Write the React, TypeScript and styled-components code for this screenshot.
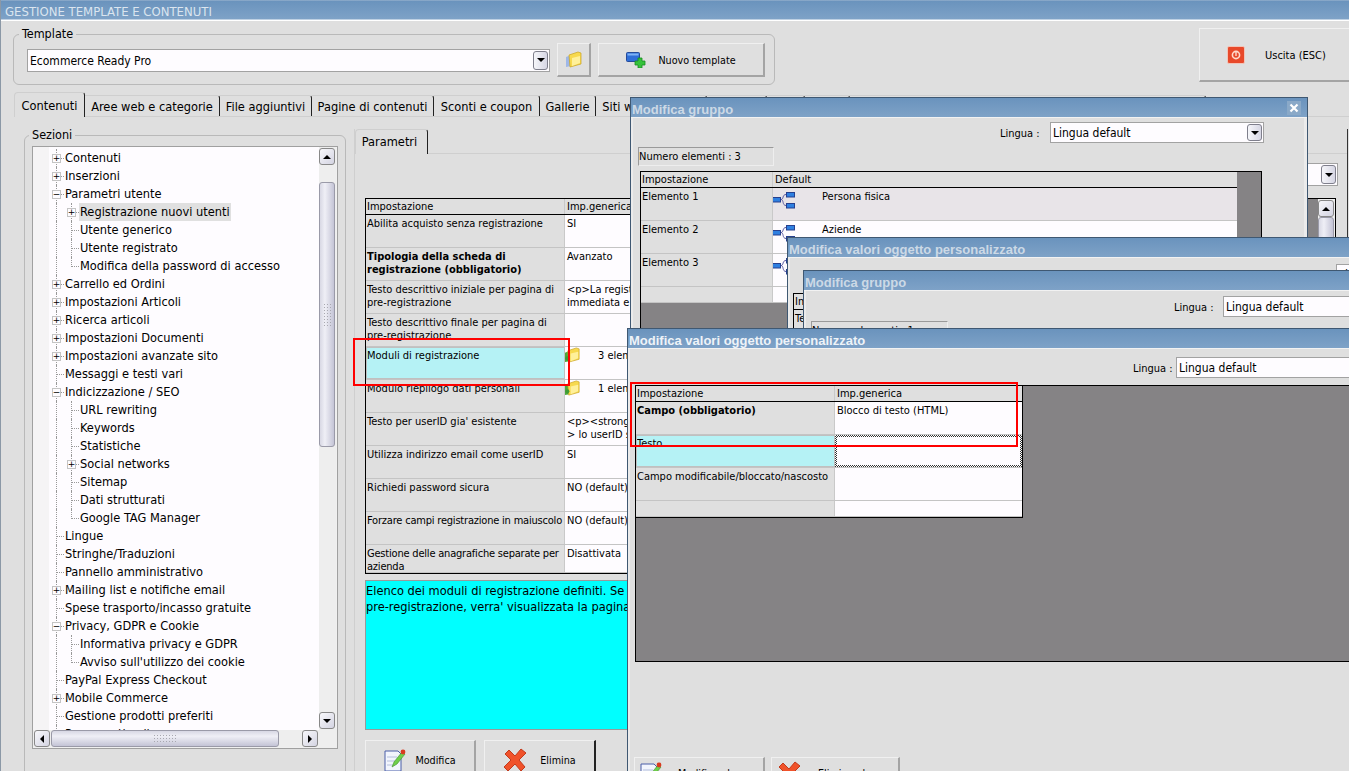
import React from 'react';
import styled, { createGlobalStyle } from 'styled-components';

const Global = createGlobalStyle`
  html, body { margin: 0; padding: 0; background: #dfdfdf; overflow: hidden; }
  * { box-sizing: border-box; }
  body { font-family: "DejaVu Sans Condensed", "DejaVu Sans", sans-serif; font-stretch: condensed; font-size: 11px; color: #000; }
`;

const Page = styled.div`
  position: relative; width: 1349px; height: 771px; overflow: hidden; background: #dfdfdf;
  border-left: 1px solid #8b98a6; display: flex; flex-direction: column;
`;
const AppTitle = styled.div`
  height: 21px; flex: none; padding: 3px 0 0 4px; line-height: 17px; font-size: 13px; color: #dbe5ef;
  background: linear-gradient(#a4bad2 0, #6a93bd 1px, #7ea2c7 19px, #fff 20px);
`;
const TopRow = styled.div`display: flex; height: 71px; flex: none;`;
const Group = styled.fieldset<{ $w: number; $h: number }>`
  width: ${p => p.$w}px; height: ${p => p.$h}px; margin: 0; padding: 0; min-width: 0;
  border: 1px solid #b9b9b9; border-radius: 6px;
`;
const TemplateGroup = styled(Group)`margin: 6px 0 0 12px;`;
const SectionGroup = styled(Group)`margin: 11px 0 0 0; flex: none;`;
const Legend = styled.legend`
  margin-left: 5px; padding: 0 3px; font-size: 12.5px; line-height: 14px; height: 14px;
`;
const SectionLegend = styled(Legend)`margin-left: 4px;`;
const TemplateRow = styled.div`display: flex; align-items: center; gap: 7px; padding: 2px 0 0 13px;`;

const SelectBox = styled.div<{ $w: number; $h?: number }>`
  width: ${p => p.$w}px; height: ${p => p.$h ?? 21}px; flex: none; background: #fefcff;
  border: 1px solid #a2a2a2; display: flex; align-items: center; justify-content: space-between;
  padding: 0 1px 0 2px; font-size: 12px;
  & > span:first-child { padding-top: 1px; }
`;
const ArrowBtn = styled.span`
  width: 15px; height: calc(100% - 2px); flex: none; border: 1px solid #7f7f8c; border-radius: 3px;
  background: linear-gradient(90deg, #f6f6fa, #d6d6e4); display: flex; align-items: center; justify-content: center;
`;
const Tri = styled.span<{ $d: 'u' | 'd' | 'l' | 'r' }>`
  width: 0; height: 0; border: 4px solid transparent;
  ${p => p.$d === 'd' && 'border-top-color:#000;border-bottom-width:0;'}
  ${p => p.$d === 'u' && 'border-bottom-color:#000;border-top-width:0;'}
  ${p => p.$d === 'l' && 'border-right-color:#000;border-left-width:0;'}
  ${p => p.$d === 'r' && 'border-left-color:#000;border-right-width:0;'}
`;
const Select = ({ w, h, text }: { w: number; h?: number; text: string }) => (
  <SelectBox $w={w} $h={h}><span>{text}</span><ArrowBtn><Tri $d="d" /></ArrowBtn></SelectBox>
);

const Button = styled.div<{ $w: number; $h: number; $gap?: number; $focus?: boolean; $start?: boolean }>`
  width: ${p => p.$w}px; height: ${p => p.$h}px; flex: none; background: #dfdfdf; font-size: 10.7px;
  border-top: 1px solid #f0f0f0; border-left: 1px solid #f0f0f0;
  border-right: 2px solid ${p => (p.$focus ? '#222' : '#a4a4a4')}; border-bottom: 2px solid #a4a4a4;
  display: flex; align-items: center; justify-content: ${p => (p.$start ? 'flex-start' : 'center')};
  padding-left: ${p => (p.$start ? 5 : 0)}px; gap: ${p => p.$gap ?? 10}px;
  & > span { padding-top: 1px; }
`;
const ExitButton = styled(Button)`margin: 7px 0 0 auto; border-right: 0; font-size: 11px; padding-left: 27px; justify-content: flex-start;`;

const TabBar = styled.div`
  display: flex; height: 25px; flex: none; margin-left: 13px; border-bottom: 1px solid #cfcfcf; font-size: 12.7px;
`;
const Tab = styled.div<{ $w: number; $active?: boolean }>`
  width: ${p => p.$w}px; flex: none; display: flex; align-items: center; justify-content: center;
  white-space: nowrap; overflow: hidden; border-right: 1px solid #222; border-top-right-radius: 3px;
  margin-top: ${p => (p.$active ? 0 : 3)}px;
  border-top: 1px solid #cfcfcf; border-left: ${p => (p.$active ? '1px solid #cfcfcf' : '0')};
  ${p => p.$active && 'border-top-left-radius: 4px; margin-bottom: -1px; background: #dfdfdf;'}
`;
const SubTab = styled(Tab)`padding: 0 4px 2px 0;`;
const Main = styled.div`display: flex; flex: 1; min-height: 0; padding-left: 23px; border-left: 0;`;

const TreeBox = styled.div`
  margin: 4px 0 0 7px; width: 306px; height: 603px; border: 1px solid #a0a0a0; background: #f0f0f0;
  display: grid; grid-template-columns: 1fr 18px; grid-template-rows: 1fr 18px;
`;
const TreeView = styled.div`
  overflow: hidden; padding-top: 2px; background: linear-gradient(90deg, #f5f4f5 16px, #fefcff 16px);
`;
const TreeRowBox = styled.div`display: flex; height: 18px; align-items: stretch; padding-left: 16px; white-space: nowrap; font-size: 12.7px;`;
const Guide = styled.span<{ $line: boolean; $hook: boolean; $end?: boolean }>`
  position: relative; width: 15px; flex: none;
  &::before { content: ''; position: absolute; left: 7px; top: 0; bottom: ${p => (p.$end ? '8px' : '0')}; border-left: 1px dotted ${p => (p.$line ? '#999' : 'transparent')}; }
  &::after { content: ''; position: absolute; left: 8px; right: 0; top: 9px; border-top: 1px dotted ${p => (p.$hook ? '#999' : 'transparent')}; }
`;
const Expander = styled.span`
  position: absolute; left: 3px; top: 5px; width: 9px; height: 9px; z-index: 1; background: #fefcff;
  border: 1px solid #c4c4c4; display: flex; align-items: center; justify-content: center;
  font: 9px/7px "DejaVu Sans", sans-serif;
`;
const TreeLabel = styled.span<{ $sel?: boolean }>`
  line-height: 18px; padding: 0 1px; align-self: stretch; ${p => p.$sel && 'background: #e0e0e0;'}
`;

const VBar = styled.div`display: flex; flex-direction: column; width: 17px; flex: none; background: #eeeeee; padding: 1px 0;`;
const HBar = styled.div`display: flex; height: 17px; background: #eeeeee; padding: 0 1px; grid-column: 1;`;
const ScrollBtn = styled.span`
  width: 16px; height: 17px; flex: none; border: 1px solid #888; border-radius: 3px;
  background: linear-gradient(135deg, #f8f8fb, #d4d4e2); display: flex; align-items: center; justify-content: center;
`;
const VThumb = styled.div<{ $top: number; $h: number }>`
  width: 16px; height: ${p => p.$h}px; margin-top: ${p => p.$top}px; flex: none; border: 1px solid #9a9aa8; border-radius: 3px;
  background: linear-gradient(90deg, #d8d8e4, #efeff6 35%, #c4c4d6); display: flex; align-items: center; justify-content: center;
`;
const HThumb = styled.div<{ $w: number }>`
  width: ${p => p.$w}px; margin-left: 1px; flex: none; border: 1px solid #9a9aa8; border-radius: 3px;
  background: linear-gradient(#d8d8e4, #efeff6 35%, #c4c4d6); display: flex; align-items: center; justify-content: center;
`;
const Grip = styled.span<{ $w: number; $h: number }>`
  width: ${p => p.$w}px; height: ${p => p.$h}px;
  background-image: radial-gradient(#a8a8b0 0.7px, transparent 0.8px); background-size: 3px 3px;
`;
const Corner = styled.div`background: #eeeeee;`;
const Fill = styled.div`flex: 1;`;

const RightColumn = styled.div`
  margin: 12px 0 0 8px; width: 994px; flex: none; border-left: 1px solid #cfcfcf; border-right: 1px solid #333;
  display: flex; flex-direction: column;
`;
const SubTabBar = styled.div`display: flex; height: 25px; flex: none; border-bottom: 1px solid #cfcfcf; font-size: 12.7px;`;
const ParamsBody = styled.div`display: flex; flex-direction: column; padding: 9px 0 0 10px;`;
const ParamSelectRow = styled.div`display: flex; justify-content: flex-end; padding-right: 9px; height: 24px;`;

const Frame = styled.div<{ $w: number; $h: number; $mt: number; $ml?: number }>`
  width: ${p => p.$w}px; height: ${p => p.$h}px; margin-top: ${p => p.$mt}px; margin-left: ${p => p.$ml ?? 0}px; flex: none;
  background: #858385; border: 1px solid #000; display: flex; justify-content: space-between; overflow: hidden;
`;
const Table = styled.div<{ $w: number; $boxed?: boolean }>`
  width: ${p => p.$w}px; flex: none; align-self: flex-start; font-size: 11px;
  ${p => p.$boxed && 'border-right: 1px solid #000; border-bottom: 1px solid #000;'}
`;
const Row = styled.div<{ $h: number; $head?: boolean; $label: number }>`
  display: grid; grid-template-columns: ${p => p.$label}px 1fr; height: ${p => p.$h}px;
  border-bottom: 1px solid ${p => (p.$head ? '#000' : '#c4c4c4')};
`;
const LabelCell = styled.div<{ $bold?: boolean; $sel?: boolean; $head?: boolean; $tight?: boolean }>`
  padding: ${p => (p.$head || p.$sel ? 1 : 2)}px 0 0 ${p => (p.$sel ? 0 : 1)}px; line-height: 13px; overflow: hidden; background: ${p => (p.$sel ? '#b5f2f5' : '#dfdfdf')};
  border-right: 1px solid #c9c9c9; font-weight: ${p => (p.$bold ? 700 : 400)};
  ${p => p.$sel && 'border: 1px solid #c0c0c0;'}
  ${p => p.$tight && 'letter-spacing: -0.2px; white-space: pre;'}
`;
const ValueCell = styled.div<{ $tone?: 'head' | 'soft' | 'focus' }>`
  padding: ${p => (p.$tone === 'head' ? 1 : 2)}px 1px 0 2px; line-height: 13px; overflow: hidden; white-space: pre-line;
  display: flex; align-items: flex-start;
  background: ${p => (p.$tone === 'head' ? '#dfdfdf' : p.$tone === 'soft' ? '#e8e4e8' : '#fefcff')};
  ${p => p.$tone === 'focus' && `
    border: 2px solid transparent;
    background: linear-gradient(#fefcff, #fefcff) padding-box, repeating-conic-gradient(#333 0 25%, #fff 0 50%) 0 0 / 2px 2px border-box;
  `}
`;
const IconValue = styled.span`display: flex; align-items: flex-start; white-space: nowrap;`;
const IconOffset = styled.span<{ $w: number; $top: number }>`
  width: ${p => p.$w}px; flex: none; margin: ${p => p.$top}px 0 0 -3px;
`;

const HelpBox = styled.div`
  width: 971px; height: 150px; margin-top: 6px; flex: none; background: #00ffff; padding: 2px 0; font-size: 12.7px; line-height: 16px;
  border-top: 1px solid #9a9a9a; border-left: 1px solid #9a9a9a; border-bottom: 1px solid #9a9a9a;
`;
const ButtonRow = styled.div<{ $mt: number; $ml?: number; $gap: number }>`
  display: flex; gap: ${p => p.$gap}px; margin-top: ${p => p.$mt}px; margin-left: ${p => p.$ml ?? 0}px;
`;

const Win = styled.div<{ $x: number; $y: number; $w: number; $h: number }>`
  position: absolute; left: ${p => p.$x}px; top: ${p => p.$y}px; width: ${p => p.$w}px; height: ${p => p.$h}px;
  background: #dfdfdf; border: 1px solid #3f5872; border-bottom: 0; display: flex; flex-direction: column;
  box-shadow: inset 2px 0 #ebebeb, inset -3px 0 #ebebeb;
`;
const WinTitle = styled.div<{ $active?: boolean }>`
  height: 20px; flex: none; padding: 3px 0 0 1px; display: flex; align-items: center; justify-content: space-between;
  font-family: "Liberation Sans", sans-serif; font-stretch: normal;
  font-size: 13px; font-weight: 700; color: ${p => (p.$active ? '#eef3f8' : '#ccd9e6')}; white-space: nowrap;
  background: linear-gradient(#6a93bd 0, #7ea2c7 19px, #f2f2f2 19px);
`;
const CloseBtn = styled.span`
  width: 14px; height: 14px; margin: -4px 6px 0 0; background: #8aa9c8; display: flex; align-items: center; justify-content: center;
`;
const LangRow = styled.div<{ $pt: number; $pl: number; $lw: number }>`
  display: flex; align-items: center; flex: none; padding: ${p => p.$pt}px 0 0 ${p => p.$pl}px;
  font-size: 12px; white-space: nowrap;
  & > label { width: ${p => p.$lw}px; flex: none; padding-top: 1px; font-size: 11px; }
`;
const Counter = styled.div<{ $w: number }>`
  width: ${p => p.$w}px; height: 19px; margin: 4px 0 0 7px; flex: none; font-size: 11px; line-height: 17px;
  border: 1px solid; border-color: #9a9a9a #eee #eee #9a9a9a; white-space: nowrap;
`;

const RedBox = styled.div<{ $x: number; $y: number; $w: number; $h: number }>`
  position: absolute; left: ${p => p.$x}px; top: ${p => p.$y}px; width: ${p => p.$w}px; height: ${p => p.$h}px;
  border: 2px solid #f00; pointer-events: none;
`;
const Icon = styled.svg`flex: none; display: block;`;

const FolderIcon = ({ s = 18, green = false }: { s?: number; green?: boolean }) => (
  <Icon width={s} height={s} viewBox="0 0 18 18">
    <path d="M1 6l5-2v11l-5 1z" fill={green ? '#4aa83c' : '#9fb7e6'} />
    <path d="M4 4l9-3 3 1v11L5 16z" fill="#f7d94e" stroke="#c9a21f" strokeWidth=".7" />
    <path d="M7 7l8-2v7l-8 3z" fill="#fff09a" />
    {green && <circle cx="3.5" cy="12" r="2.2" fill="#3f9a35" />}
  </Icon>
);
const NewIcon = () => (
  <Icon width={20} height={16} viewBox="0 0 20 16">
    <rect x=".5" y=".5" width="13" height="9" rx="1" fill="#2f6fd8" stroke="#254a9a" />
    <rect x="1.5" y="1.5" width="11" height="2" fill="#7fb2f5" />
    <path d="M12 6h4v3h3v4h-3v3h-4v-3H9V9h3z" fill="#35c23a" stroke="#178a22" strokeWidth=".8" />
  </Icon>
);
const PowerIcon = () => (
  <Icon width={18} height={18} viewBox="0 0 18 18">
    <rect x=".5" y=".5" width="17" height="17" rx="1.5" fill="#e8492a" stroke="#f2c4b8" />
    <circle cx="9" cy="9" r="3.6" fill="none" stroke="#ffd9cc" strokeWidth="1.6" />
    <path d="M9 5v5" stroke="#ffd9cc" strokeWidth="1.4" />
  </Icon>
);
const EditIcon = () => (
  <Icon width={22} height={24} viewBox="0 0 22 24">
    <path d="M1 3h13l3 3v17H1z" fill="#f2f5fd" stroke="#4a5fa8" />
    <path d="M3 9h10M3 13h8M3 17h7" stroke="#b4bfdc" />
    <path d="M8 19l2-5 8-10 3 2-8 10z" fill="#6fcf4a" stroke="#3f8f2c" strokeWidth=".6" />
    <circle cx="19" cy="4" r="2.4" fill="#d93a1f" />
  </Icon>
);
const DeleteIcon = () => (
  <Icon width={24} height={24} viewBox="0 0 24 24">
    <path d="M2 6l4-4 6 6 6-7 5 4-7 7 6 7-4 4-6-7-7 7-4-4 7-7z" fill="#f0522a" stroke="#c23a1c" />
  </Icon>
);
const NodesIcon = () => (
  <Icon width={24} height={18} viewBox="0 0 24 18">
    <path d="M9 7.5c3 0 1-5 5-5M9 7.5c3 0 1 6 5 6" fill="none" stroke="#5a5aa0" />
    <rect x=".5" y="5.5" width="8" height="4.5" fill="#2f7fe0" stroke="#26408f" />
    <rect x="14.5" y=".5" width="8" height="4.5" fill="#2f7fe0" stroke="#26408f" />
    <rect x="14.5" y="11.5" width="8" height="4.5" fill="#2f7fe0" stroke="#26408f" />
  </Icon>
);
const CloseIcon = () => (
  <Icon width={10} height={10} viewBox="0 0 10 10">
    <path d="M1.5 1.5l7 7M8.5 1.5l-7 7" stroke="#fff" strokeWidth="2.2" />
  </Icon>
);

type Node = { t: string; l: 1 | 2; e?: '+' | '-'; s?: boolean; end?: boolean };
const nodes: Node[] = [
  { t: 'Contenuti', l: 1, e: '+' }, { t: 'Inserzioni', l: 1, e: '+' }, { t: 'Parametri utente', l: 1, e: '-' },
  { t: 'Registrazione nuovi utenti', l: 2, e: '+', s: true }, { t: 'Utente generico', l: 2 }, { t: 'Utente registrato', l: 2 },
  { t: 'Modifica della password di accesso', l: 2, end: true }, { t: 'Carrello ed Ordini', l: 1, e: '+' },
  { t: 'Impostazioni Articoli', l: 1, e: '+' }, { t: 'Ricerca articoli', l: 1, e: '+' }, { t: 'Impostazioni Documenti', l: 1, e: '+' },
  { t: 'Impostazioni avanzate sito', l: 1, e: '+' }, { t: 'Messaggi e testi vari', l: 1 }, { t: 'Indicizzazione / SEO', l: 1, e: '-' },
  { t: 'URL rewriting', l: 2 }, { t: 'Keywords', l: 2 }, { t: 'Statistiche', l: 2 }, { t: 'Social networks', l: 2, e: '+' },
  { t: 'Sitemap', l: 2 }, { t: 'Dati strutturati', l: 2 }, { t: 'Google TAG Manager', l: 2, end: true }, { t: 'Lingue', l: 1 },
  { t: 'Stringhe/Traduzioni', l: 1 }, { t: 'Pannello amministrativo', l: 1 }, { t: 'Mailing list e notifiche email', l: 1, e: '+' },
  { t: 'Spese trasporto/incasso gratuite', l: 1 }, { t: 'Privacy, GDPR e Cookie', l: 1, e: '-' },
  { t: 'Informativa privacy e GDPR', l: 2 }, { t: "Avviso sull'utilizzo dei cookie", l: 2, end: true },
  { t: 'PayPal Express Checkout', l: 1 }, { t: 'Mobile Commerce', l: 1, e: '+' }, { t: 'Gestione prodotti preferiti', l: 1 },
  { t: 'Pagamenti online', l: 1 },
];

const TreeRow = ({ n }: { n: Node }) => (
  <TreeRowBox>
    <Guide $line $hook={n.l === 1}>
      {n.l === 1 && n.e && <Expander>{n.e === '+' ? '+' : '−'}</Expander>}
    </Guide>
    {n.l === 2 && (
      <Guide $line $hook $end={n.end}>
        {n.e && <Expander>+</Expander>}
      </Guide>
    )}
    <TreeLabel $sel={n.s}>{n.t}</TreeLabel>
  </TreeRowBox>
);

type Param = { a: string; b?: React.ReactNode; bold?: boolean; sel?: boolean; h?: number; tight?: boolean };
const folderValue = (t: string, w: number) => (
  <IconValue><IconOffset $w={w} $top={-2}><FolderIcon s={17} green /></IconOffset>{t}</IconValue>
);
const params: Param[] = [
  { a: 'Abilita acquisto senza registrazione', b: 'SI' },
  { a: 'Tipologia della scheda di registrazione (obbligatorio)', b: 'Avanzato', bold: true },
  { a: 'Testo descrittivo iniziale per pagina di pre-registrazione', b: '<p>La registrazione è\nimmediata e semplice' },
  { a: 'Testo descrittivo finale per pagina di pre-registrazione' },
  { a: 'Moduli di registrazione', b: folderValue('3 elementi', 34), sel: true },
  { a: 'Modulo riepilogo dati personali', b: folderValue('1 elemento', 34) },
  { a: "Testo per userID gia' esistente", b: '<p><strong>Attenzione\n> lo userID scelto' },
  { a: 'Utilizza indirizzo email come userID', b: 'SI' },
  { a: 'Richiedi password sicura', b: 'NO (default)' },
  { a: 'Forzare campi registrazione in maiuscolo', b: 'NO (default)', tight: true },
  { a: 'Gestione delle anagrafiche separate per\nazienda', b: 'Disattivata', h: 28, tight: true },
];

const Head = ({ label, a, b }: { label: number; a: string; b: string }) => (
  <Row $h={16} $head $label={label}>
    <LabelCell $head>{a}</LabelCell>
    <ValueCell $tone="head">{b}</ValueCell>
  </Row>
);

const Nodes = ({ t }: { t?: string }) => (
  <IconValue><IconOffset $w={50} $top={2}><NodesIcon /></IconOffset>{t}</IconValue>
);

export default function App() {
  return (
    <Page>
      <Global />
      <AppTitle>GESTIONE TEMPLATE E CONTENUTI</AppTitle>
      <TopRow>
        <TemplateGroup $w={762} $h={58}>
          <Legend>Template</Legend>
          <TemplateRow>
            <Select w={523} h={23} text="Ecommerce Ready Pro" />
            <Button $w={34} $h={34}><FolderIcon /></Button>
            <Button $w={167} $h={34} $gap={12}><NewIcon /><span>Nuovo template</span></Button>
          </TemplateRow>
        </TemplateGroup>
        <ExitButton $w={150} $h={54} $gap={20}><PowerIcon /><span>Uscita (ESC)</span></ExitButton>
      </TopRow>
      <TabBar>
        <Tab $w={71} $active>Contenuti</Tab>
        <Tab $w={135}>Aree web e categorie</Tab>
        <Tab $w={92}>File aggiuntivi</Tab>
        <Tab $w={122}>Pagine di contenuti</Tab>
        <Tab $w={106}>Sconti e coupon</Tab>
        <Tab $w={56}>Gallerie</Tab>
        <Tab $w={111}>Siti web collegati</Tab>
        <Tab $w={60}>Altro</Tab>
        <Tab $w={38}>Log</Tab>
        <Tab $w={45}>Info</Tab>
        <Tab $w={356}>Opzioni</Tab>
      </TabBar>
      <Main>
        <SectionGroup $w={322} $h={700}>
          <SectionLegend>Sezioni</SectionLegend>
          <TreeBox>
            <TreeView>{nodes.map(n => <TreeRow key={n.t} n={n} />)}</TreeView>
            <VBar>
              <ScrollBtn><Tri $d="u" /></ScrollBtn>
              <VThumb $top={17} $h={265}><Grip $w={9} $h={24} /></VThumb>
              <Fill />
              <ScrollBtn><Tri $d="d" /></ScrollBtn>
            </VBar>
            <HBar>
              <ScrollBtn><Tri $d="l" /></ScrollBtn>
              <HThumb $w={228}><Grip $w={24} $h={9} /></HThumb>
              <Fill />
              <ScrollBtn><Tri $d="r" /></ScrollBtn>
            </HBar>
            <Corner />
          </TreeBox>
        </SectionGroup>
        <RightColumn>
          <SubTabBar><SubTab $w={73} $active>Parametri</SubTab></SubTabBar>
          <ParamsBody>
            <ParamSelectRow><Select w={400} h={23} text="" /></ParamSelectRow>
            <Frame $w={971} $h={376} $mt={11}>
              <Table $w={941}>
                <Head label={199} a="Impostazione" b="Imp.generica" />
                {params.map(p => (
                  <Row key={p.a} $h={p.h ?? 33} $label={199}>
                    <LabelCell $bold={p.bold} $sel={p.sel} $tight={p.tight}>{p.a}</LabelCell>
                    <ValueCell>{p.b}</ValueCell>
                  </Row>
                ))}
              </Table>
              <VBar>
                <ScrollBtn><Tri $d="u" /></ScrollBtn>
                <VThumb $top={0} $h={200}><Grip $w={9} $h={24} /></VThumb>
              </VBar>
            </Frame>
            <HelpBox>
              Elenco dei moduli di registrazione definiti. Se non viene definito alcun modulo e prevista una pagina di
              <br />
              pre-registrazione, verra' visualizzata la pagina di registrazione standard.
            </HelpBox>
            <ButtonRow $mt={10} $gap={8}>
              <Button $w={111} $h={40} $gap={9}><EditIcon /><span>Modifica</span></Button>
              <Button $w={112} $h={40} $gap={13} $focus><DeleteIcon /><span>Elimina</span></Button>
            </ButtonRow>
          </ParamsBody>
        </RightColumn>
      </Main>

      <Win $x={629} $y={97} $w={678} $h={240}>
        <WinTitle>Modifica gruppo<CloseBtn><CloseIcon /></CloseBtn></WinTitle>
        <LangRow $pt={4} $pl={369} $lw={50}><label>Lingua :</label><Select w={214} text="Lingua default" /></LangRow>
        <Counter $w={136}>Numero elementi : 3</Counter>
        <Frame $w={622} $h={200} $mt={5} $ml={9}>
          <Table $w={596}>
            <Head label={132} a="Impostazione" b="Default" />
            <Row $h={33} $label={132}><LabelCell>Elemento 1</LabelCell><ValueCell $tone="soft"><Nodes t="Persona fisica" /></ValueCell></Row>
            <Row $h={33} $label={132}><LabelCell>Elemento 2</LabelCell><ValueCell><Nodes t="Aziende" /></ValueCell></Row>
            <Row $h={33} $label={132}><LabelCell>Elemento 3</LabelCell><ValueCell><Nodes /></ValueCell></Row>
            <Row $h={16} $label={132}><LabelCell /><ValueCell /></Row>
          </Table>
        </Frame>
      </Win>

      <Win $x={786} $y={237} $w={700} $h={100}>
        <WinTitle>Modifica valori oggetto personalizzato</WinTitle>
        <LangRow $pt={6} $pl={500} $lw={48}><label>Lingua :</label><Select w={214} text="Lingua default" /></LangRow>
        <Frame $w={500} $h={60} $mt={8} $ml={5}>
          <Table $w={400}>
            <Head label={199} a="Impostazione" b="Imp.generica" />
            <Row $h={33} $label={199}><LabelCell>Testo</LabelCell><ValueCell /></Row>
          </Table>
        </Frame>
      </Win>

      <Win $x={802} $y={270} $w={700} $h={70}>
        <WinTitle>Modifica gruppo</WinTitle>
        <LangRow $pt={5} $pl={370} $lw={49}><label>Lingua :</label><Select w={214} text="Lingua default" /></LangRow>
        <Counter $w={137}>Numero elementi : 1</Counter>
      </Win>

      <Win $x={626} $y={328} $w={900} $h={460}>
        <WinTitle $active>Modifica valori oggetto personalizzato</WinTitle>
        <LangRow $pt={8} $pl={505} $lw={43}><label>Lingua :</label><Select w={300} text="Lingua default" /></LangRow>
        <Frame $w={800} $h={277} $mt={7} $ml={7}>
          <Table $w={387} $boxed>
            <Head label={199} a="Impostazione" b="Imp.generica" />
            <Row $h={33} $label={199}><LabelCell $bold>Campo (obbligatorio)</LabelCell><ValueCell>Blocco di testo (HTML)</ValueCell></Row>
            <Row $h={33} $label={199}><LabelCell $sel>Testo</LabelCell><ValueCell $tone="focus" /></Row>
            <Row $h={33} $label={199}><LabelCell>Campo modificabile/bloccato/nascosto</LabelCell><ValueCell /></Row>
            <Row $h={16} $label={199}><LabelCell /><ValueCell /></Row>
          </Table>
        </Frame>
        <ButtonRow $mt={95} $ml={6} $gap={6}>
          <Button $w={131} $h={32} $gap={16} $start><EditIcon /><span>Modifica el.</span></Button>
          <Button $w={129} $h={32} $gap={17} $start><DeleteIcon /><span>Elimina el.</span></Button>
        </ButtonRow>
      </Win>

      <RedBox $x={352} $y={338} $w={217} $h={48} />
      <RedBox $x={629} $y={382} $w={388} $h={65} />
    </Page>
  );
}
